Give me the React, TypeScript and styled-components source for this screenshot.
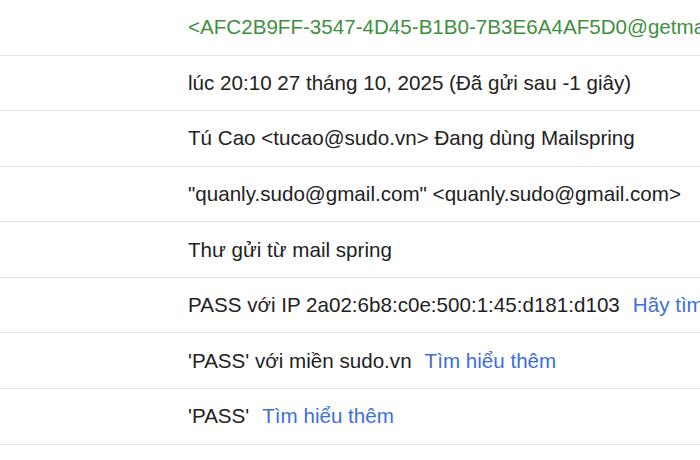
import React from "react";
import styled, { createGlobalStyle } from "styled-components";

const GlobalStyle = createGlobalStyle`
  html, body {
    margin: 0;
    padding: 0;
    background: #ffffff;
  }
  body {
    font-family: "Liberation Sans", Arial, sans-serif;
    overflow: hidden;
  }
`;

const Table = styled.div`
  width: 700px;
  display: flex;
  flex-direction: column;
`;

const Row = styled.div`
  display: grid;
  grid-template-columns: 176px 1fr;
  align-items: center;
  height: 55.57px;
  box-sizing: border-box;
  border-bottom: 1px solid #e2e2e2;
`;

const Label = styled.div``;

const Value = styled.div<{ $tone?: "green" }>`
  padding-left: 12px;
  font-size: 20.6px;
  color: ${p => (p.$tone === "green" ? "#3f8f3f" : "#222222")};
  white-space: nowrap;
  overflow: hidden;
`;

const MoreLink = styled.a`
  color: #3e6fd8;
  text-decoration: none;
  margin-left: 13px;
  cursor: pointer;
`;

interface HeaderRow {
  value: string;
  link?: string;
  tone?: "green";
}

const rows: HeaderRow[] = [
  { value: "<AFC2B9FF-3547-4D45-B1B0-7B3E6A4AF5D0@getmailspring.com>", tone: "green" },
  { value: "lúc 20:10 27 tháng 10, 2025 (Đã gửi sau -1 giây)" },
  { value: "Tú Cao <tucao@sudo.vn> Đang dùng Mailspring" },
  { value: "\"quanly.sudo@gmail.com\" <quanly.sudo@gmail.com>" },
  { value: "Thư gửi từ mail spring" },
  { value: "PASS với IP 2a02:6b8:c0e:500:1:45:d181:d103", link: "Hãy tìm hiểu thêm" },
  { value: "'PASS' với miền sudo.vn", link: "Tìm hiểu thêm" },
  { value: "'PASS'", link: "Tìm hiểu thêm" }
];

export default function App() {
  return (
    <>
      <GlobalStyle />
      <Table>
        {rows.map((row, i) => (
          <Row key={i}>
            <Label />
            <Value $tone={row.tone}>
              {row.value}
              {row.link && <MoreLink>{row.link}</MoreLink>}
            </Value>
          </Row>
        ))}
      </Table>
    </>
  );
}
